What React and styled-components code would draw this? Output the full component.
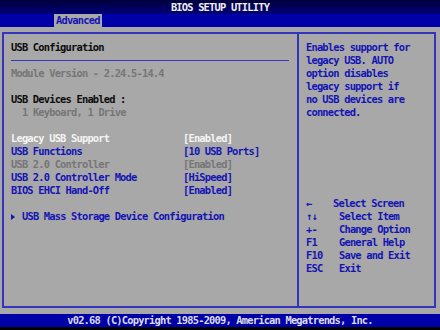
import styled, { createGlobalStyle } from "styled-components";

const GlobalStyle = createGlobalStyle`
    html, body {
        margin: 0;
        padding: 0;
        background: #000;
    }
    body {
        width: 440px;
        height: 330px;
        overflow: hidden;
        font-family: "DejaVu Sans Mono", "Liberation Mono", monospace;
        font-size: 10.4px;
        font-weight: bold;
        letter-spacing: -0.8px;
    }
`;

const BLUE = "#1414b4";
const GREY = "#767676";

const helpLines = [
    "Enables support for",
    "legacy USB. AUTO",
    "option disables",
    "legacy support if",
    "no USB devices are",
    "connected.",
];

const settings = [
    { label: "Legacy USB Support", value: "[Enabled]", tone: "selected" },
    { label: "USB Functions", value: "[10 USB Ports]", tone: "active" },
    { label: "USB 2.0 Controller", value: "[Enabled]", tone: "disabled" },
    { label: "USB 2.0 Controller Mode", value: "[HiSpeed]", tone: "active" },
    { label: "BIOS EHCI Hand-Off", value: "[Enabled]", tone: "active" },
];

const keys = [
    { key: "\u2190", desc: "Select Screen", width: 27 },
    { key: "\u2191\u2193", desc: "Select Item", width: 33 },
    { key: "+-", desc: "Change Option", width: 33 },
    { key: "F1", desc: "General Help", width: 33 },
    { key: "F10", desc: "Save and Exit", width: 33 },
    { key: "ESC", desc: "Exit", width: 33 },
];

const toneColors = {
    selected: "#f4f4f4",
    active: BLUE,
    disabled: GREY,
};

const App = () => {
    return (
        <Screen>
            <GlobalStyle />
            <TitleBar>BIOS SETUP UTILITY</TitleBar>
            <TabBar>
                <Tab>Advanced</Tab>
            </TabBar>
            <Main>
                <Frame>
                    <LeftPanel>
                        <Line>USB Configuration</Line>
                        <Separator />
                        <Line $color={GREY}>Module Version - 2.24.5-14.4</Line>
                        <Gap />
                        <Line>USB Devices Enabled :</Line>
                        <Line $color={GREY} $indent>1 Keyboard, 1 Drive</Line>
                        <Gap />
                        <SettingsGrid>
                            {settings.map((s) => (
                                <Setting key={s.label} $color={toneColors[s.tone]}>
                                    <span>{s.label}</span>
                                    <span>{s.value}</span>
                                </Setting>
                            ))}
                        </SettingsGrid>
                        <Gap />
                        <SubMenu>
                            <Pointer />
                            USB Mass Storage Device Configuration
                        </SubMenu>
                    </LeftPanel>
                    <RightPanel>
                        <div>
                            {helpLines.map((l) => (
                                <Line key={l} $color={BLUE}>{l}</Line>
                            ))}
                        </div>
                        <Legend>
                            {keys.map((k) => (
                                <KeyRow key={k.desc}>
                                    <KeyName $width={k.width}>{k.key}</KeyName>
                                    <span>{k.desc}</span>
                                </KeyRow>
                            ))}
                        </Legend>
                    </RightPanel>
                </Frame>
            </Main>
            <Footer>v02.68 (C)Copyright 1985-2009, American Megatrends, Inc.</Footer>
        </Screen>
    );
};

const Screen = styled.div`
    width: 440px;
    height: 327px;
    display: flex;
    flex-direction: column;
`;

const TitleBar = styled.div`
    height: 14px;
    line-height: 14px;
    background: linear-gradient(to bottom, #00003c, #000078);
    color: #f0f0f0;
    text-align: center;
    white-space: pre;
`;

const TabBar = styled.div`
    height: 13px;
    background: #0000a8;
    display: flex;
    padding-left: 54px;
`;

const Tab = styled.div`
    background: #a8a8a8;
    color: ${BLUE};
    line-height: 13px;
    padding: 0 2px;
`;

const Main = styled.div`
    flex: 1;
    background: #a8a8a8;
    padding: 5px 4px 6px 2px;
    display: flex;
`;

const Frame = styled.div`
    flex: 1;
    display: flex;
    border: 2px solid #3434bc;
`;

const LeftPanel = styled.div`
    width: 295px;
    border-right: 2px solid #3434bc;
    padding: 7px 8px 0 7px;
    box-sizing: border-box;
`;

const RightPanel = styled.div`
    flex: 1;
    display: flex;
    flex-direction: column;
    padding: 7px 6px 31px 7px;
`;

const Line = styled.div`
    line-height: 13px;
    height: 13px;
    white-space: pre;
    color: ${(p) => p.$color || "#0c0c0c"};
    padding-left: ${(p) => (p.$indent ? "11px" : "0")};
`;

const Gap = styled.div`
    height: 13px;
`;

const Separator = styled.div`
    height: 1px;
    background: #3838c4;
    margin: 6px 0;
`;

const SettingsGrid = styled.div`
    display: flex;
    flex-direction: column;
`;

const Setting = styled.div`
    display: grid;
    grid-template-columns: 172px 1fr;
    line-height: 13px;
    height: 13px;
    white-space: pre;
    color: ${(p) => p.$color};
`;

const SubMenu = styled.div`
    display: flex;
    align-items: center;
    line-height: 13px;
    height: 13px;
    color: ${BLUE};
    white-space: pre;
`;

const Pointer = styled.span`
    width: 0;
    height: 0;
    border-top: 3px solid transparent;
    border-bottom: 3px solid transparent;
    border-left: 4px solid ${BLUE};
    margin: 1px 7px 0 0;
`;

const Legend = styled.div`
    margin-top: auto;
    color: ${BLUE};
`;

const KeyRow = styled.div`
    display: flex;
    line-height: 13px;
    height: 13px;
    white-space: pre;
`;

const KeyName = styled.span`
    width: ${(p) => p.$width}px;
    flex-shrink: 0;
`;

const Footer = styled.div`
    height: 13px;
    line-height: 13px;
    background: #0000a8;
    color: #dcdcec;
    text-align: center;
    white-space: pre;
`;

export default App;
